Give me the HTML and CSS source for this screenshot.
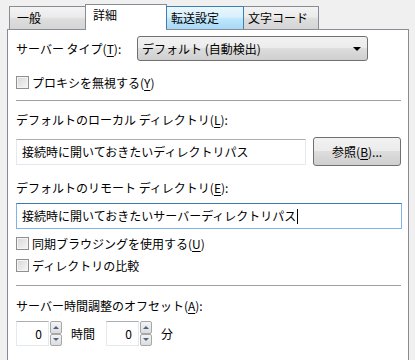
FILE: index.html
```html
<!DOCTYPE html>
<html lang="ja">
<head>
    <meta charset="UTF-8">
    <title>詳細</title>
    <link rel="stylesheet" href="styles.css">
</head>
<body>
    <div class="tabs">
        <div class="tab first">一般</div>
        <div class="tab selected">詳細</div>
        <div class="tab hover narrow">転送設定</div>
        <div class="tab narrow last">文字コード</div>
    </div>
    <div class="panel">
        <div class="row server-row">
            <span class="label">サーバー タイプ(<u>T</u>):</span>
            <div class="select">
                <span>デフォルト (自動検出)</span>
                <span class="arrow"></span>
            </div>
        </div>
        <label class="check row proxy">
            <span class="box"></span>
            <span>プロキシを無視する(<u>Y</u>)</span>
        </label>
        <div class="sep first-sep"></div>
        <div class="label line local-label">デフォルトのローカル ディレクトリ(<u>L</u>):</div>
        <div class="row local-row">
            <div class="input local">接続時に開いておきたいディレクトリパス</div>
            <div class="button">参照(<u>B</u>)...</div>
        </div>
        <div class="label line remote-label">デフォルトのリモート ディレクトリ(<u>E</u>):</div>
        <div class="input remote focus">接続時に開いておきたいサーバーディレクトリパス<span class="caret"></span></div>
        <label class="check row sync">
            <span class="box"></span>
            <span>同期ブラウジングを使用する(<u>U</u>)</span>
        </label>
        <label class="check row compare">
            <span class="box"></span>
            <span>ディレクトリの比較</span>
        </label>
        <div class="sep second-sep"></div>
        <div class="label line offset-label">サーバー時間調整のオフセット(<u>A</u>):</div>
        <div class="row spin-row">
            <div class="spin">
                <div class="num">0</div>
                <div class="arrows">
                    <span class="up"></span>
                    <span class="down"></span>
                </div>
            </div>
            <span class="unit">時間</span>
            <div class="spin">
                <div class="num">0</div>
                <div class="arrows">
                    <span class="up"></span>
                    <span class="down"></span>
                </div>
            </div>
            <span class="unit">分</span>
        </div>
    </div>
</body>
</html>
```

FILE: styles.css
```css
body {
    margin: 0;
    padding: 0;
    background: #f0f0f0;
    font-family: "Noto Sans CJK JP", "Noto Sans", sans-serif;
    font-size: 12px;
    color: #000;
    overflow: hidden;
    height: 360px;
}
u {
    text-decoration: underline;
    text-underline-offset: 2px;
}
.tabs {
    display: flex;
    align-items: flex-end;
    height: 29px;
    padding-left: 9px;
}
.tab {
    box-sizing: border-box;
    height: 23px;
    line-height: 21px;
    padding-left: 7px;
    border: 1px solid #898c95;
    border-bottom: none;
    background: linear-gradient(#f3f3f3, #ebebeb 45%, #dddddd 55%, #d5d5d5);
    margin-left: -1px;
}
.tab.first {
    margin-left: 0;
    width: 77px;
}
.tab.selected {
    position: relative;
    z-index: 1;
    width: 82px;
    height: 26px;
    line-height: 19px;
    margin-bottom: -1px;
    background: #fff;
}
.tab.hover {
    width: 78px;
    border-color: #3c7fb1;
    background: linear-gradient(#eaf6fd, #d9f0fc 45%, #bee6fd 55%, #a7d9f5);
    position: relative;
    z-index: 1;
}
.tab.narrow {
    padding-left: 4px;
}
.tab.last {
    width: 76px;
}
.panel {
    box-sizing: border-box;
    width: 402px;
    height: 331px;
    margin-left: 7px;
    background: #fff;
    border: 1px solid #898c95;
    border-bottom: none;
    padding: 6px 7px 0 8px;
}
.row {
    display: flex;
    align-items: center;
}
.line {
    height: 18px;
    line-height: 18px;
}
.server-row {
    height: 25px;
}
.server-row .label {
    width: 121px;
}
.select {
    box-sizing: border-box;
    width: 231px;
    height: 25px;
    border: 1px solid #707070;
    border-radius: 3px;
    background: linear-gradient(#f2f2f2, #ebebeb 50%, #dddddd 50%, #cfcfcf);
    display: flex;
    align-items: center;
    justify-content: space-between;
    padding: 0 6px 0 4px;
}
.arrow {
    width: 0;
    height: 0;
    border-left: 4px solid transparent;
    border-right: 4px solid transparent;
    border-top: 4px solid #000;
    margin-top: 1px;
}
.check {
    height: 18px;
    gap: 3px;
}
.box {
    box-sizing: border-box;
    width: 13px;
    height: 13px;
    border: 1px solid #8e8f8f;
    background: linear-gradient(135deg, #d8d8d8, #f6f6f6);
    box-shadow: inset 0 0 0 1px #f4f4f4;
}
.proxy {
    margin-top: 12px;
}
.sep {
    height: 1px;
    background: #a0a0a0;
}
.first-sep {
    margin-top: 9px;
}
.local-label {
    margin-top: 10px;
}
.local-row {
    margin-top: 8px;
    height: 29px;
    gap: 7px;
}
.input {
    box-sizing: border-box;
    height: 26px;
    line-height: 24px;
    padding-left: 5px;
    border: 1px solid #e3e9ef;
    border-top-color: #abadb3;
    background: #fff;
    display: flex;
    align-items: center;
}
.input.local {
    width: 291px;
}
.button {
    box-sizing: border-box;
    width: 88px;
    height: 29px;
    border: 1px solid #707070;
    border-radius: 3px;
    background: linear-gradient(#f2f2f2, #ebebeb 50%, #dddddd 50%, #cfcfcf);
    display: flex;
    align-items: center;
    justify-content: center;
}
.remote-label {
    margin-top: 13px;
}
.input.remote {
    margin-top: 6px;
    width: 386px;
    border-color: #7eb4ea;
    border-top-color: #3d7bad;
}
.caret {
    width: 1px;
    height: 15px;
    background: #000;
    margin-left: 1px;
}
.sync {
    margin-top: 5px;
}
.compare {
    margin-top: 4px;
}
.second-sep {
    margin-top: 11px;
}
.offset-label {
    margin-top: 11px;
}
.spin-row {
    margin-top: 6px;
    height: 25px;
}
.spin {
    display: flex;
    height: 25px;
}
.num {
    box-sizing: border-box;
    width: 33px;
    height: 25px;
    border: 1px solid #e3e9ef;
    border-top-color: #abadb3;
    text-align: right;
    padding-right: 6px;
    line-height: 23px;
}
.arrows {
    display: flex;
    flex-direction: column;
    width: 12px;
    margin-left: 1px;
}
.arrows span {
    box-sizing: border-box;
    flex: 1;
    border: 1px solid #a7a7a7;
    border-radius: 2px;
    background: linear-gradient(#f4f4f4, #dcdcdc);
    display: flex;
    align-items: center;
    justify-content: center;
}
.arrows .up::after,
.arrows .down::after {
    content: "";
    width: 0;
    height: 0;
    border-left: 3px solid transparent;
    border-right: 3px solid transparent;
}
.arrows .up::after {
    border-bottom: 3px solid #4d6185;
}
.arrows .down::after {
    border-top: 3px solid #4d6185;
}
.unit {
    margin: 0 11px 0 9px;
}
```
